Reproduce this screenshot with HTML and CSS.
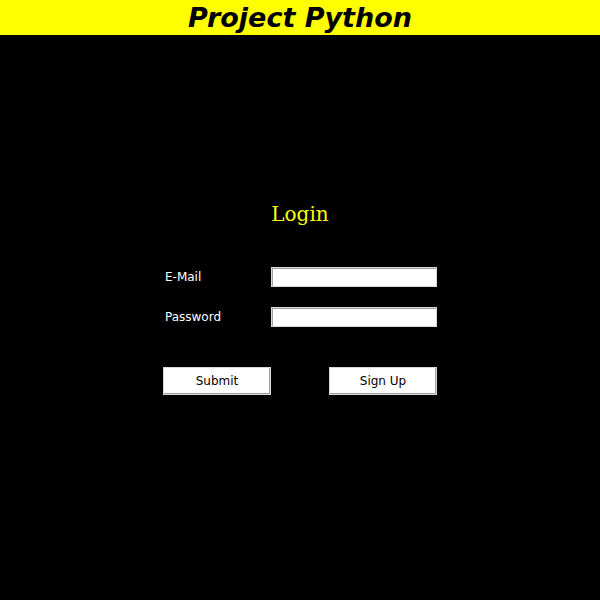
FILE: index.html
```html
<!DOCTYPE html>
<html>
<head>
<meta charset="utf-8">
<link rel="stylesheet" href="styles.css">
</head>
<body>
<header class="topbar"><h1 class="title">Project Python</h1></header>
<main class="page">
  <h2 class="login-title">Login</h2>
  <form class="form">
    <div class="row">
      <label class="label">E-Mail</label>
      <input class="entry" type="text">
    </div>
    <div class="row">
      <label class="label">Password</label>
      <input class="entry" type="password">
    </div>
    <div class="buttons">
      <button class="btn" type="button">Submit</button>
      <button class="btn" type="button">Sign Up</button>
    </div>
  </form>
</main>
</body>
</html>
```
FILE: styles.css
```css
html, body {
  margin: 0;
  padding: 0;
  background: #000;
  height: 100%;
}
.topbar {
  background: #ffff00;
  height: 35px;
  display: flex;
  justify-content: center;
}
.title {
  margin: 0;
  padding-top: 1px;
  font-family: "DejaVu Sans", sans-serif;
  font-weight: bold;
  font-style: oblique;
  font-size: 27px;
  line-height: 34px;
  color: #000;
}
.page {
  display: flex;
  flex-direction: column;
  align-items: center;
  padding-top: 167px;
}
.login-title {
  margin: 0;
  font-family: "DejaVu Serif", serif;
  font-weight: normal;
  font-size: 20px;
  line-height: 24px;
  color: #ffff00;
}
.form {
  width: 274px;
  margin-top: 41px;
  display: flex;
  flex-direction: column;
  gap: 20px;
}
.row {
  display: flex;
  justify-content: space-between;
  align-items: center;
  height: 20px;
}
.label {
  font-family: "DejaVu Sans", sans-serif;
  font-size: 12px;
  color: #fff;
  padding-left: 2px;
}
.entry {
  box-sizing: border-box;
  width: 166px;
  height: 20px;
  margin: 0;
  padding: 0 3px;
  background: #fff;
  border: 1px solid #d9d9d9;
  box-shadow: inset 1px 1px 0 #a0a0a0;
  outline: none;
  font-family: "DejaVu Sans", sans-serif;
  font-size: 12px;
}
.buttons {
  display: flex;
  justify-content: space-between;
  margin-top: 20px;
}
.btn {
  box-sizing: border-box;
  width: 108px;
  height: 28px;
  margin: 0;
  padding: 0;
  background: #fff;
  border: 1px solid #d9d9d9;
  box-shadow: inset -1px -1px 0 #a0a0a0;
  font-family: "DejaVu Sans", sans-serif;
  font-size: 12px;
  color: #000;
}
```
